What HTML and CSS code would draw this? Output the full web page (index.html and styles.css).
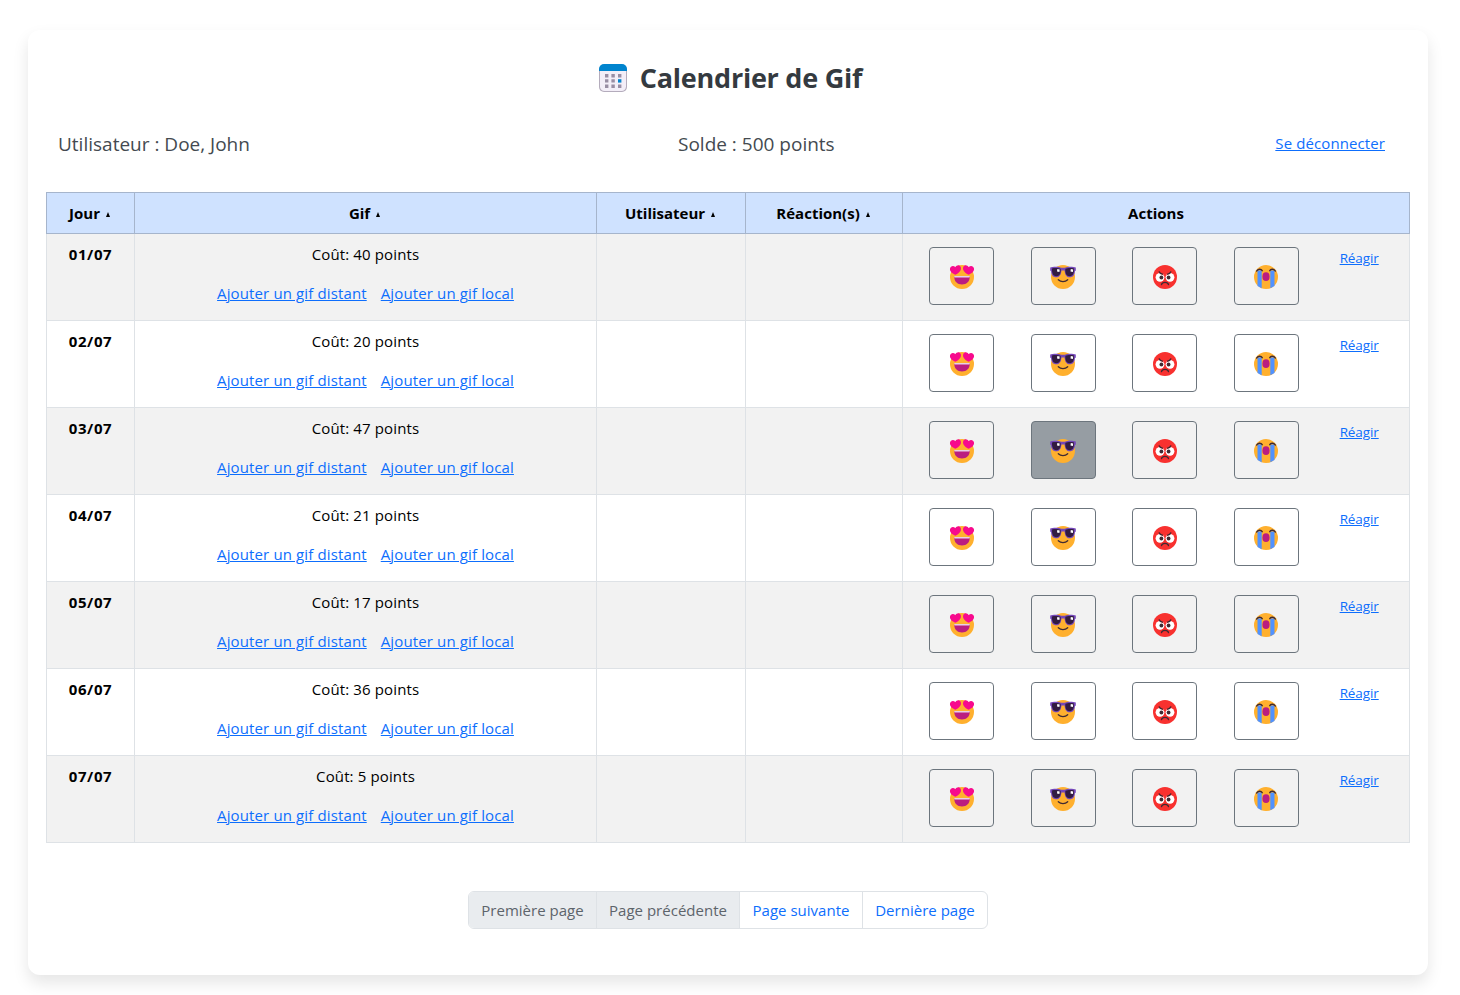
FILE: index.html
```
<!DOCTYPE html>
<html lang="fr">
<head>
<meta charset="utf-8">
<title>Calendrier de Gif</title>
<link rel="stylesheet" href="styles.css">
</head>
<body>
<svg class="defs" aria-hidden="true">
  <symbol id="love" viewBox="0 0 26 26">
    <circle cx="13" cy="14" r="12" fill="#ffb02e"/>
    <path d="M5.300 13.200h15.400c.3 5.200-3 8.200-7.700 8.200s-8-3-7.700-8.200z" fill="#bb1d80"/>
    <path d="M5.300 12.900h15.400c.2 1.100-.2 1.600-1 1.600H6.300c-.8 0-1.200-.5-1-1.600z" fill="#e8cfe6"/>
    <path d="M6.500 11.800C3 10.300.6 8.300 1 5.500c.5-2.800 3.600-3.500 5.400-1.300C7.500 2 10.600 1.500 11.700 4c1.200 3-1.500 6-5.200 7.800z" fill="#f70a8d"/>
    <path d="M19.500 11.800c3.500-1.500 5.900-3.500 5.500-6.300-.5-2.800-3.600-3.500-5.400-1.300C18.500 2 15.400 1.500 14.300 4c-1.200 3 1.500 6 5.200 7.800z" fill="#f70a8d"/>
  </symbol>
  <symbol id="cool" viewBox="0 0 26 26">
    <circle cx="13" cy="14" r="12" fill="#ffb02e"/>
    <path d="M8.300 16.800c2.500 2.400 6.900 2.400 9.400 0" fill="none" stroke="#402a32" stroke-width="1.300" stroke-linecap="round"/>
    <g transform="translate(0 1)">
      <path d="M.2 3.600C2.500 2.400 9 2.200 11.400 3.800h3.200C17 2.200 23.500 2.400 25.800 3.600v2.900l-.9.800c-.2 3.900-1.900 6-5.100 6-3.300 0-4.800-2.200-5.300-6.800h-3c-.5 4.600-2 6.800-5.300 6.800-3.200 0-4.900-2.100-5.100-6L.2 6.500z" fill="#7447b8"/>
      <path d="M2 4.500c2.300-.7 6.500-.6 8.600.2.500 4.400-1 7.500-4.400 7.500C3 12.200 1.700 8.800 2 4.500zM15.400 4.700c2.100-.8 6.300-.9 8.600-.2.300 4.300-1 7.700-4.200 7.700-3.400 0-4.900-3.100-4.400-7.500z" fill="#321b41"/>
      <path d="M7.300 5l2.400.6-.3 2.400-2.400-.6zM20.800 5l2.400.6-.3 2.400-2.400-.6z" fill="#fff"/>
    </g>
  </symbol>
  <symbol id="angry" viewBox="0 0 26 26">
    <circle cx="13" cy="14" r="12" fill="#f8312f"/>
    <circle cx="8" cy="14.300" r="4.400" fill="#fff"/><circle cx="18" cy="14.300" r="4.400" fill="#fff"/>
    <path d="M5.500 9l6.500 3.800L9.500 8zM20.500 9L14 12.800 16.500 8z" fill="#f8312f"/>
    <circle cx="9.400" cy="14.500" r="1.900" fill="#402a32"/><circle cx="16.600" cy="14.500" r="1.900" fill="#402a32"/>
    <path d="M7.200 8.800c.5 1.400 1.700 2.200 3.300 2.400M18.800 8.800c-.5 1.400-1.700 2.200-3.300 2.400M9.500 21.500c.7-2.800 6.300-2.800 7 0" fill="none" stroke="#402a32" stroke-width="1.300" stroke-linecap="round"/>
  </symbol>
  <symbol id="cry" viewBox="0 0 26 26">
    <circle cx="13" cy="14" r="12" fill="#ffb02e"/>
    <path d="M4.500 7.500h4.200v17.800L4.500 23zM21.500 7.500h-4.200v17.800l4.200-2.300z" fill="#5092ff"/>
    <path d="M3.700 8.100c1-2.400 4.400-2.400 5.500-.4M22.300 8.100c-1-2.400-4.400-2.400-5.500-.4" fill="none" stroke="#402a32" stroke-width="1.400" stroke-linecap="round"/>
    <ellipse cx="13" cy="13.700" rx="3.600" ry="4.400" fill="#bb1d80"/>
  </symbol>
</svg>
<main class="card">
  <h1 class="title">
    <svg class="title-icon" viewBox="0 0 28 28">
      <rect x="0" y="1" width="28" height="27" rx="5" fill="#b4acbc"/>
      <rect x="1" y="1" width="26" height="26" rx="4.500" fill="#f3eef8"/>
      <path d="M0 7V5a5 5 0 0 1 5-5h18a5 5 0 0 1 5 5v2z" fill="#0084ce"/>
      <g fill="#998ea4">
        <path d="M6 10h3.400v3.400H6zM12.400 10h3.400v3.400h-3.400zM19 10h3.400v3.400H19zM6 15.200h3.400v3.400H6zM12.400 15.200h3.400v3.400h-3.400zM6 20.600h3.400V24H6zM12.400 20.600h3.400V24h-3.400zM19 20.600h3.400V24H19z"/>
      </g>
      <path d="M19 15.200h3.400v3.400H19z" fill="#0084ce"/>
    </svg>
    <span>Calendrier de Gif</span>
  </h1>
  <div class="info">
    <span class="user">Utilisateur : Doe, John</span>
    <span class="balance">Solde : 500 points</span>
    <a class="logout" href="#">Se déconnecter</a>
  </div>
  <table class="calendar">
    <colgroup><col class="c-day"><col class="c-gif"><col class="c-user"><col class="c-react"><col class="c-act"></colgroup>
    <thead>
      <tr><th>Jour <i class="sort"></i></th><th>Gif <i class="sort"></i></th><th>Utilisateur <i class="sort"></i></th><th>Réaction(s) <i class="sort"></i></th><th>Actions</th></tr>
    </thead>
    <tbody>
      <tr>
        <th>01/07</th>
        <td><p class="cost">Coût: 40 points</p><p class="links"><a href="#">Ajouter un gif distant</a><a href="#">Ajouter un gif local</a></p></td>
        <td></td><td></td>
        <td class="act"><div class="actions"><button class="btn"><svg><use href="#love"/></svg></button><button class="btn"><svg><use href="#cool"/></svg></button><button class="btn"><svg><use href="#angry"/></svg></button><button class="btn"><svg><use href="#cry"/></svg></button><a class="react" href="#">Réagir</a></div></td>
      </tr>
      <tr>
        <th>02/07</th>
        <td><p class="cost">Coût: 20 points</p><p class="links"><a href="#">Ajouter un gif distant</a><a href="#">Ajouter un gif local</a></p></td>
        <td></td><td></td>
        <td class="act"><div class="actions"><button class="btn"><svg><use href="#love"/></svg></button><button class="btn"><svg><use href="#cool"/></svg></button><button class="btn"><svg><use href="#angry"/></svg></button><button class="btn"><svg><use href="#cry"/></svg></button><a class="react" href="#">Réagir</a></div></td>
      </tr>
      <tr>
        <th>03/07</th>
        <td><p class="cost">Coût: 47 points</p><p class="links"><a href="#">Ajouter un gif distant</a><a href="#">Ajouter un gif local</a></p></td>
        <td></td><td></td>
        <td class="act"><div class="actions"><button class="btn"><svg><use href="#love"/></svg></button><button class="btn active"><svg><use href="#cool"/></svg></button><button class="btn"><svg><use href="#angry"/></svg></button><button class="btn"><svg><use href="#cry"/></svg></button><a class="react" href="#">Réagir</a></div></td>
      </tr>
      <tr>
        <th>04/07</th>
        <td><p class="cost">Coût: 21 points</p><p class="links"><a href="#">Ajouter un gif distant</a><a href="#">Ajouter un gif local</a></p></td>
        <td></td><td></td>
        <td class="act"><div class="actions"><button class="btn"><svg><use href="#love"/></svg></button><button class="btn"><svg><use href="#cool"/></svg></button><button class="btn"><svg><use href="#angry"/></svg></button><button class="btn"><svg><use href="#cry"/></svg></button><a class="react" href="#">Réagir</a></div></td>
      </tr>
      <tr>
        <th>05/07</th>
        <td><p class="cost">Coût: 17 points</p><p class="links"><a href="#">Ajouter un gif distant</a><a href="#">Ajouter un gif local</a></p></td>
        <td></td><td></td>
        <td class="act"><div class="actions"><button class="btn"><svg><use href="#love"/></svg></button><button class="btn"><svg><use href="#cool"/></svg></button><button class="btn"><svg><use href="#angry"/></svg></button><button class="btn"><svg><use href="#cry"/></svg></button><a class="react" href="#">Réagir</a></div></td>
      </tr>
      <tr>
        <th>06/07</th>
        <td><p class="cost">Coût: 36 points</p><p class="links"><a href="#">Ajouter un gif distant</a><a href="#">Ajouter un gif local</a></p></td>
        <td></td><td></td>
        <td class="act"><div class="actions"><button class="btn"><svg><use href="#love"/></svg></button><button class="btn"><svg><use href="#cool"/></svg></button><button class="btn"><svg><use href="#angry"/></svg></button><button class="btn"><svg><use href="#cry"/></svg></button><a class="react" href="#">Réagir</a></div></td>
      </tr>
      <tr>
        <th>07/07</th>
        <td><p class="cost">Coût: 5 points</p><p class="links"><a href="#">Ajouter un gif distant</a><a href="#">Ajouter un gif local</a></p></td>
        <td></td><td></td>
        <td class="act"><div class="actions"><button class="btn"><svg><use href="#love"/></svg></button><button class="btn"><svg><use href="#cool"/></svg></button><button class="btn"><svg><use href="#angry"/></svg></button><button class="btn"><svg><use href="#cry"/></svg></button><a class="react" href="#">Réagir</a></div></td>
      </tr>
    </tbody>
  </table>
  <nav class="pages">
    <span class="page first off">Première page</span><span class="page prev off">Page précédente</span><a class="page next" href="#">Page suivante</a><a class="page last" href="#">Dernière page</a>
  </nav>
</main>
</body>
</html>
```
FILE: styles.css
```
* { box-sizing: border-box; }
body {
  margin: 0;
  padding: 30px 32px 20px 28px;
  background: #fff;
  color: #000;
  font: 15px/24px "Segoe UI", "Open Sans", sans-serif;
  letter-spacing: 0.13px;
  overflow: hidden;
}
.defs { display: none; }
a { color: #0d6efd; text-decoration-thickness: 1px; text-underline-offset: 1px; }
.card {
  width: 1400px;
  height: 945px;
  padding: 30px 18px 0;
  border-radius: 12px;
  background: #fff;
  box-shadow: 0 8px 16px rgba(0, 0, 0, 0.1);
}
.title {
  display: flex;
  justify-content: center;
  align-items: center;
  gap: 13px;
  height: 36px;
  margin: 0;
  padding-left: 5px;
  color: #343a40;
  font-size: 27px;
  font-weight: 700;
  line-height: 36px;
  letter-spacing: -0.25px;
}
.title-icon { width: 28px; height: 28px; }
.info {
  display: grid;
  grid-template-columns: 620px 1fr auto;
  align-items: center;
  height: 28px;
  margin: 34px 0 34px;
  padding: 0 25px 0 12px;
}
.user, .balance { color: #444a50; font-size: 19px; letter-spacing: 0; }
.logout { padding-bottom: 2px; letter-spacing: 0.1px; }
.calendar { width: 1364px; border-collapse: collapse; table-layout: fixed; }
.c-day { width: 88px; }
.c-gif { width: 462px; }
.c-user { width: 149px; }
.c-react { width: 157px; }
.c-act { width: 507px; }
th, td { padding: 0; border: 1px solid #dee2e6; text-align: center; vertical-align: top; }
thead th {
  height: 41px;
  padding-top: 8px;
  border-color: #a6b5cc;
  background: #cfe2ff;
  letter-spacing: 0;
}
.sort {
  display: inline-block;
  margin: 0 2px 2px 2px;
  border: solid transparent;
  border-width: 0 2.5px 5px;
  border-bottom-color: #000;
}
tbody tr { height: 87px; }
tbody tr:nth-child(odd) { background: #f2f2f2; }
tbody th { padding-top: 8px; letter-spacing: 0.6px; }
.cost { margin: 8px 0 15px; }
.links { display: flex; justify-content: center; gap: 14px; margin: 0; }
.actions { display: flex; gap: 36.67px; padding: 13px 0 0 26px; }
.btn {
  display: grid;
  place-items: center;
  width: 65px;
  height: 58px;
  padding: 0;
  border: 1px solid #6c757d;
  border-radius: 4px;
  background: transparent;
}
.btn svg { width: 26px; height: 26px; }
.btn.active { background: #969da3; }
.react { margin-left: 4px; font-size: 13.5px; line-height: 22px; letter-spacing: -0.1px; }
.pages {
  display: flex;
  width: 520px;
  height: 38px;
  margin: 48px auto 0;
  border: 1px solid #dee2e6;
  border-radius: 6px;
  overflow: hidden;
}
.page {
  border-left: 1px solid #dee2e6;
  line-height: 37px;
  text-align: center;
  letter-spacing: 0.02px;
  color: #0d6efd;
  text-decoration: none;
}
.page.off { background: #e9ecef; color: #5d646b; }
.first { width: 127px; border-left: 0; }
.prev { width: 143px; }
.next { width: 123px; }
.last { width: 125px; }
```
